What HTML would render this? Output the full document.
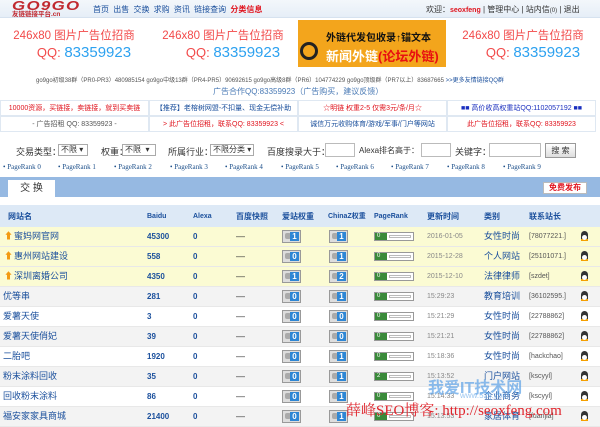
<!DOCTYPE html>
<html><head><meta charset="utf-8"><style>
*{margin:0;padding:0;box-sizing:border-box}
body{width:600px;height:416px;overflow:hidden;background:#fff;font-family:"Liberation Sans","Noto Sans CJK SC",sans-serif;font-size:9px;color:#333;position:relative}
.a{position:absolute;white-space:nowrap}
.hd{left:0;top:0;width:600px;height:18px;background:linear-gradient(#f3f7fb,#e6eef7);border-bottom:1px solid #d6e2ef}
.ban{top:19px;height:48px;width:148px;background:#fff;text-align:center}
.bt{color:#f24a4a;font-size:11.5px;margin-top:8px}
.bq{font-size:15px;color:#2ea2f0;margin-top:1px;padding-left:20px}
.bq span{color:#f24a4a;font-size:13px}
.lr{height:16px;border:1px solid #dfe8f2;text-align:center;line-height:15px;font-size:7px;width:149px;overflow:hidden}
.sel{border:1px solid #aaa;background:#fff;height:12px;font-size:8px;line-height:10px;padding-left:2px}
.inp{border:1px solid #bbb;background:#fff;height:14px}
.pr{color:#1c4f8a;font-size:7px;top:163px;font-family:"Liberation Serif",serif}
.row{left:0;width:600px;height:20px;border-bottom:1px solid #e8e8e8}
.c{position:absolute;top:4px;font-size:9px;line-height:11px}
.ic{position:absolute;top:3px;width:19px;height:13px;border:1px solid #999;background:#ddd}
.ic i{position:absolute;right:1px;top:1px;width:9px;height:9px;background:#2e86d4;color:#fff;font-size:8px;line-height:9px;text-align:center;font-style:normal;font-weight:bold}
.ic b{position:absolute;left:2px;top:2px;width:6px;height:6px;background:#aaa;border-radius:2px}
.pb{position:absolute;left:374px;top:5px;width:40px;height:9px;border:1px solid #999;background:#fff}
.pb i{position:absolute;left:0;top:0;width:12px;height:7px;background:#3a8a3a;color:#fff;font-size:6px;line-height:7px;font-style:normal;padding-left:2px}
.pb b{position:absolute;left:14px;top:2px;width:22px;height:3px;border:1px solid #bbb}
.qq{position:absolute;left:581px;top:4px;width:7px;height:10px;border-radius:4px 4px 2px 2px;background:#333}
.qq:after{content:"";position:absolute;left:1px;top:4px;width:5px;height:5px;background:#fff;border-radius:3px}
.qq:before{content:"";position:absolute;left:0;top:8px;width:7px;height:2px;background:#f5a000}
</style></head><body>
<div class="a hd"></div>
<div class="a" style="left:12px;top:-2px;font:bold italic 13px 'Liberation Sans',sans-serif;color:#c0282f;letter-spacing:1px;transform:scaleX(1.3);transform-origin:left">GO9GO</div>
<div class="a" style="left:12px;top:11px;font-size:6.5px;line-height:7px;color:#c0282f;font-weight:bold">友链链接平台.cn</div>
<div class="a" style="left:93px;top:4px;font-size:8px;color:#1a4f9c;word-spacing:2px">首页 出售 交换 求购 资讯 链接查询 <b style="color:#e0141e">分类信息</b></div>
<div class="a" style="left:426px;top:4px;font-size:8px;color:#333">欢迎：<b style="color:#e0141e;font-size:7px">seoxfeng</b> | 管理中心 | 站内信<span style="font-size:6px">(0)</span> | 退出</div>

<div class="a ban" style="left:0"><div class="bt">246x80 图片广告位招商</div><div class="bq"><span>QQ: </span>83359923</div></div>
<div class="a ban" style="left:149px"><div class="bt">246x80 图片广告位招商</div><div class="bq"><span>QQ: </span>83359923</div></div>
<div class="a" style="left:298px;top:20px;width:148px;height:47px;background:#f3a51c;overflow:hidden">
<div class="a" style="left:28px;top:9px;font-size:10px;font-weight:bold;color:#111">外链代发包收录↑锚文本</div>
<div class="a" style="left:28px;top:26px;font-size:13px;font-weight:bold;color:#fff">新闻外链<span style="color:#e81010">(论坛外链)</span></div>
<div class="a" style="left:2px;top:22px;width:18px;height:18px;border:3px solid #222;border-radius:50%"></div></div>
<div class="a ban" style="left:449px"><div class="bt">246x80 图片广告位招商</div><div class="bq"><span>QQ: </span>83359923</div></div>

<div class="a" style="left:36px;top:75px;font-size:6px;color:#555">go9go初级38群（PR0-PR3）480985154 go9go中级13群（PR4-PR5）90692615 go9go高级8群（PR6）104774229 go9go顶级群（PR7以上）83687665 <span style="color:#1a4f9c">&gt;&gt;更多友情链接QQ群</span></div>
<div class="a" style="left:213px;top:86px;font-size:8px;color:#4a7ab5">广告合作QQ:83359923（广告购买，建议反馈）</div>

<div class="a lr" style="left:0;top:100px;color:#e0141e">10000资源，买链接，卖链接，就到买卖链</div>
<div class="a lr" style="left:149px;top:100px;color:#1a4f9c">【推荐】老榕树网盟-不扣量、现金无偿补助</div>
<div class="a lr" style="left:298px;top:100px;color:#e0141e">☆明链 权重2-5 仅需3元/条/月☆</div>
<div class="a lr" style="left:447px;top:100px;color:#1a2fbf">■■ 高价收高权重站QQ:1102057192 ■■</div>
<div class="a lr" style="left:0;top:116px;color:#555">- 广告招租 QQ: 83359923 -</div>
<div class="a lr" style="left:149px;top:116px;color:#e0141e">&gt; 此广告位招租，联系QQ: 83359923 &lt;</div>
<div class="a lr" style="left:298px;top:116px;color:#1a4f9c">诚信万元收购体育/游戏/军事/门户等网站</div>
<div class="a lr" style="left:447px;top:116px;color:#e0141e">此广告位招租，联系QQ: 83359923</div>

<div class="a" style="left:16px;top:145px;font-size:9px;color:#333">交易类型：</div>
<div class="a sel" style="left:58px;top:144px;width:30px">不限 ▾</div>
<div class="a" style="left:101px;top:145px;font-size:9px">权重：</div>
<div class="a sel" style="left:122px;top:144px;width:34px">不限 &nbsp;▾</div>
<div class="a" style="left:168px;top:145px;font-size:9px">所属行业：</div>
<div class="a sel" style="left:210px;top:144px;width:44px">不限分类 ▾</div>
<div class="a" style="left:267px;top:145px;font-size:9px">百度搜录大于：</div>
<div class="a inp" style="left:325px;top:143px;width:30px"></div>
<div class="a" style="left:359px;top:145px;font-size:8px">Alexa排名高于：</div>
<div class="a inp" style="left:421px;top:143px;width:30px"></div>
<div class="a" style="left:455px;top:145px;font-size:9px">关键字：</div>
<div class="a inp" style="left:489px;top:143px;width:52px"></div>
<div class="a" style="left:545px;top:143px;width:31px;height:15px;border:1px solid #999;background:linear-gradient(#fff,#ddd);font-size:8px;text-align:center;line-height:13px">搜 索</div>

<div class="a pr" style="left:3px">• PageRank 0</div><div class="a pr" style="left:58px">• PageRank 1</div><div class="a pr" style="left:114px">• PageRank 2</div><div class="a pr" style="left:170px">• PageRank 3</div><div class="a pr" style="left:225px">• PageRank 4</div><div class="a pr" style="left:281px">• PageRank 5</div><div class="a pr" style="left:336px">• PageRank 6</div><div class="a pr" style="left:391px">• PageRank 7</div><div class="a pr" style="left:447px">• PageRank 8</div><div class="a pr" style="left:503px">• PageRank 9</div>

<div class="a" style="left:0;top:177px;width:600px;height:20px;background:#96b9e2"></div>
<div class="a" style="left:8px;top:180px;width:47px;height:17px;background:#fff;font-size:10px;text-align:center;line-height:17px;color:#333">交 换</div>
<div class="a" style="left:543px;top:182px;width:44px;height:12px;background:#fff;border:1px solid #bbb;color:#e0141e;font-weight:bold;font-size:8px;text-align:center;line-height:10px">免费发布</div>

<div class="a" style="left:0;top:205px;width:600px;height:22px;background:#dde9f6"></div>
<div style="position:absolute;left:0;top:207px;width:600px;height:20px;color:#1a4f9c;font-weight:bold">
<span class="c" style="left:8px;font-size:8px">网站名</span><span class="c" style="left:147px;font-size:7px">Baidu</span><span class="c" style="left:193px;font-size:7px">Alexa</span><span class="c" style="left:236px;font-size:8px">百度快照</span><span class="c" style="left:282px;font-size:8px">爱站权重</span><span class="c" style="left:328px;font-size:7px">ChinaZ权重</span><span class="c" style="left:374px;font-size:7px">PageRank</span><span class="c" style="left:427px;font-size:8px">更新时间</span><span class="c" style="left:484px;font-size:8px">类别</span><span class="c" style="left:529px;font-size:8px">联系站长</span></div>

<div class="a row" style="top:227px;background:#fbfbd3"><span class="c" style="left:4px;color:#f39a12">⬆</span><span class="c" style="left:14px;color:#1a4f9c">蜜妈网官网</span><span class="c" style="left:147px;color:#1a4f9c;font-weight:bold;font-size:8px">45300</span><span class="c" style="left:193px;color:#1a4f9c;font-weight:bold;font-size:8px">0</span><span class="c" style="left:236px">—</span><span class="ic" style="left:282px"><b></b><i>1</i></span><span class="ic" style="left:329px"><b></b><i>1</i></span><span class="pb"><i>0</i><b></b></span><span class="c" style="left:427px;color:#888;font-size:7px">2016-01-05</span><span class="c" style="left:484px;color:#1a4f9c">女性时尚</span><span class="c" style="left:529px;color:#555;font-size:7px">[78077221.]</span><span class="qq"></span></div>
<div class="a row" style="top:247px;background:#fbfbd3"><span class="c" style="left:4px;color:#f39a12">⬆</span><span class="c" style="left:14px;color:#1a4f9c">惠州网站建设</span><span class="c" style="left:147px;color:#1a4f9c;font-weight:bold;font-size:8px">558</span><span class="c" style="left:193px;color:#1a4f9c;font-weight:bold;font-size:8px">0</span><span class="c" style="left:236px">—</span><span class="ic" style="left:282px"><b></b><i>0</i></span><span class="ic" style="left:329px"><b></b><i>1</i></span><span class="pb"><i>0</i><b></b></span><span class="c" style="left:427px;color:#888;font-size:7px">2015-12-28</span><span class="c" style="left:484px;color:#1a4f9c">个人网站</span><span class="c" style="left:529px;color:#555;font-size:7px">[25101071.]</span><span class="qq"></span></div>
<div class="a row" style="top:267px;background:#fbfbd3"><span class="c" style="left:4px;color:#f39a12">⬆</span><span class="c" style="left:14px;color:#1a4f9c">深圳离婚公司</span><span class="c" style="left:147px;color:#1a4f9c;font-weight:bold;font-size:8px">4350</span><span class="c" style="left:193px;color:#1a4f9c;font-weight:bold;font-size:8px">0</span><span class="c" style="left:236px">—</span><span class="ic" style="left:282px"><b></b><i>1</i></span><span class="ic" style="left:329px"><b></b><i>2</i></span><span class="pb"><i>0</i><b></b></span><span class="c" style="left:427px;color:#888;font-size:7px">2015-12-10</span><span class="c" style="left:484px;color:#1a4f9c">法律律师</span><span class="c" style="left:529px;color:#555;font-size:7px">[szdet]</span><span class="qq"></span></div>
<div class="a row" style="top:287px;background:#f3f3f3"><span class="c" style="left:3px;color:#1a4f9c">优等串</span><span class="c" style="left:147px;color:#1a4f9c;font-weight:bold;font-size:8px">281</span><span class="c" style="left:193px;color:#1a4f9c;font-weight:bold;font-size:8px">0</span><span class="c" style="left:236px">—</span><span class="ic" style="left:282px"><b></b><i>0</i></span><span class="ic" style="left:329px"><b></b><i>1</i></span><span class="pb"><i>0</i><b></b></span><span class="c" style="left:427px;color:#888;font-size:7px">15:29:23</span><span class="c" style="left:484px;color:#1a4f9c">教育培训</span><span class="c" style="left:529px;color:#555;font-size:7px">[36102595.]</span><span class="qq"></span></div>
<div class="a row" style="top:307px;background:#fff"><span class="c" style="left:3px;color:#1a4f9c">爱薯天使</span><span class="c" style="left:147px;color:#1a4f9c;font-weight:bold;font-size:8px">3</span><span class="c" style="left:193px;color:#1a4f9c;font-weight:bold;font-size:8px">0</span><span class="c" style="left:236px">—</span><span class="ic" style="left:282px"><b></b><i>0</i></span><span class="ic" style="left:329px"><b></b><i>0</i></span><span class="pb"><i>0</i><b></b></span><span class="c" style="left:427px;color:#888;font-size:7px">15:21:29</span><span class="c" style="left:484px;color:#1a4f9c">女性时尚</span><span class="c" style="left:529px;color:#555;font-size:7px">[22788862]</span><span class="qq"></span></div>
<div class="a row" style="top:327px;background:#f3f3f3"><span class="c" style="left:3px;color:#1a4f9c">爱薯天使俏妃</span><span class="c" style="left:147px;color:#1a4f9c;font-weight:bold;font-size:8px">39</span><span class="c" style="left:193px;color:#1a4f9c;font-weight:bold;font-size:8px">0</span><span class="c" style="left:236px">—</span><span class="ic" style="left:282px"><b></b><i>0</i></span><span class="ic" style="left:329px"><b></b><i>0</i></span><span class="pb"><i>0</i><b></b></span><span class="c" style="left:427px;color:#888;font-size:7px">15:21:21</span><span class="c" style="left:484px;color:#1a4f9c">女性时尚</span><span class="c" style="left:529px;color:#555;font-size:7px">[22788862]</span><span class="qq"></span></div>
<div class="a row" style="top:347px;background:#fff"><span class="c" style="left:3px;color:#1a4f9c">二胎吧</span><span class="c" style="left:147px;color:#1a4f9c;font-weight:bold;font-size:8px">1920</span><span class="c" style="left:193px;color:#1a4f9c;font-weight:bold;font-size:8px">0</span><span class="c" style="left:236px">—</span><span class="ic" style="left:282px"><b></b><i>0</i></span><span class="ic" style="left:329px"><b></b><i>1</i></span><span class="pb"><i>0</i><b></b></span><span class="c" style="left:427px;color:#888;font-size:7px">15:18:36</span><span class="c" style="left:484px;color:#1a4f9c">女性时尚</span><span class="c" style="left:529px;color:#555;font-size:7px">[hackchao]</span><span class="qq"></span></div>
<div class="a row" style="top:367px;background:#f3f3f3"><span class="c" style="left:3px;color:#1a4f9c">粉末涂料回收</span><span class="c" style="left:147px;color:#1a4f9c;font-weight:bold;font-size:8px">35</span><span class="c" style="left:193px;color:#1a4f9c;font-weight:bold;font-size:8px">0</span><span class="c" style="left:236px">—</span><span class="ic" style="left:282px"><b></b><i>0</i></span><span class="ic" style="left:329px"><b></b><i>1</i></span><span class="pb"><i>2</i><b></b></span><span class="c" style="left:427px;color:#888;font-size:7px">15:13:52</span><span class="c" style="left:484px;color:#1a4f9c">门户网站</span><span class="c" style="left:529px;color:#555;font-size:7px">[kscyyl]</span><span class="qq"></span></div>
<div class="a row" style="top:387px;background:#fff"><span class="c" style="left:3px;color:#1a4f9c">回收粉末涂料</span><span class="c" style="left:147px;color:#1a4f9c;font-weight:bold;font-size:8px">86</span><span class="c" style="left:193px;color:#1a4f9c;font-weight:bold;font-size:8px">0</span><span class="c" style="left:236px">—</span><span class="ic" style="left:282px"><b></b><i>0</i></span><span class="ic" style="left:329px"><b></b><i>1</i></span><span class="pb"><i>0</i><b></b></span><span class="c" style="left:427px;color:#888;font-size:7px">15:14:33</span><span class="c" style="left:484px;color:#1a4f9c">企业商务</span><span class="c" style="left:529px;color:#555;font-size:7px">[kscyyl]</span><span class="qq"></span></div>
<div class="a row" style="top:407px;background:#f3f3f3"><span class="c" style="left:3px;color:#1a4f9c">福安家家具商城</span><span class="c" style="left:147px;color:#1a4f9c;font-weight:bold;font-size:8px">21400</span><span class="c" style="left:193px;color:#1a4f9c;font-weight:bold;font-size:8px">0</span><span class="c" style="left:236px">—</span><span class="ic" style="left:282px"><b></b><i>0</i></span><span class="ic" style="left:329px"><b></b><i>1</i></span><span class="pb"><i>0</i><b></b></span><span class="c" style="left:427px;color:#888;font-size:7px">15:13:53</span><span class="c" style="left:484px;color:#1a4f9c">家居体育</span><span class="c" style="left:529px;color:#555;font-size:7px">[fuanjia]</span><span class="qq"></span></div>

<div class="a" style="left:428px;top:374px;font-size:16px;font-weight:bold;color:rgba(90,160,230,0.7)">我爱IT技术网</div>
<div class="a" style="left:460px;top:391px;font-size:8px;color:rgba(90,160,230,0.6)">www.52ij.com</div>
<div class="a" style="left:346px;top:399px;font-size:15px;color:#e0242c;font-family:'Liberation Serif','Noto Serif CJK SC',serif">薛峰SEO博客: http://seoxfeng.com</div>
</body></html>
